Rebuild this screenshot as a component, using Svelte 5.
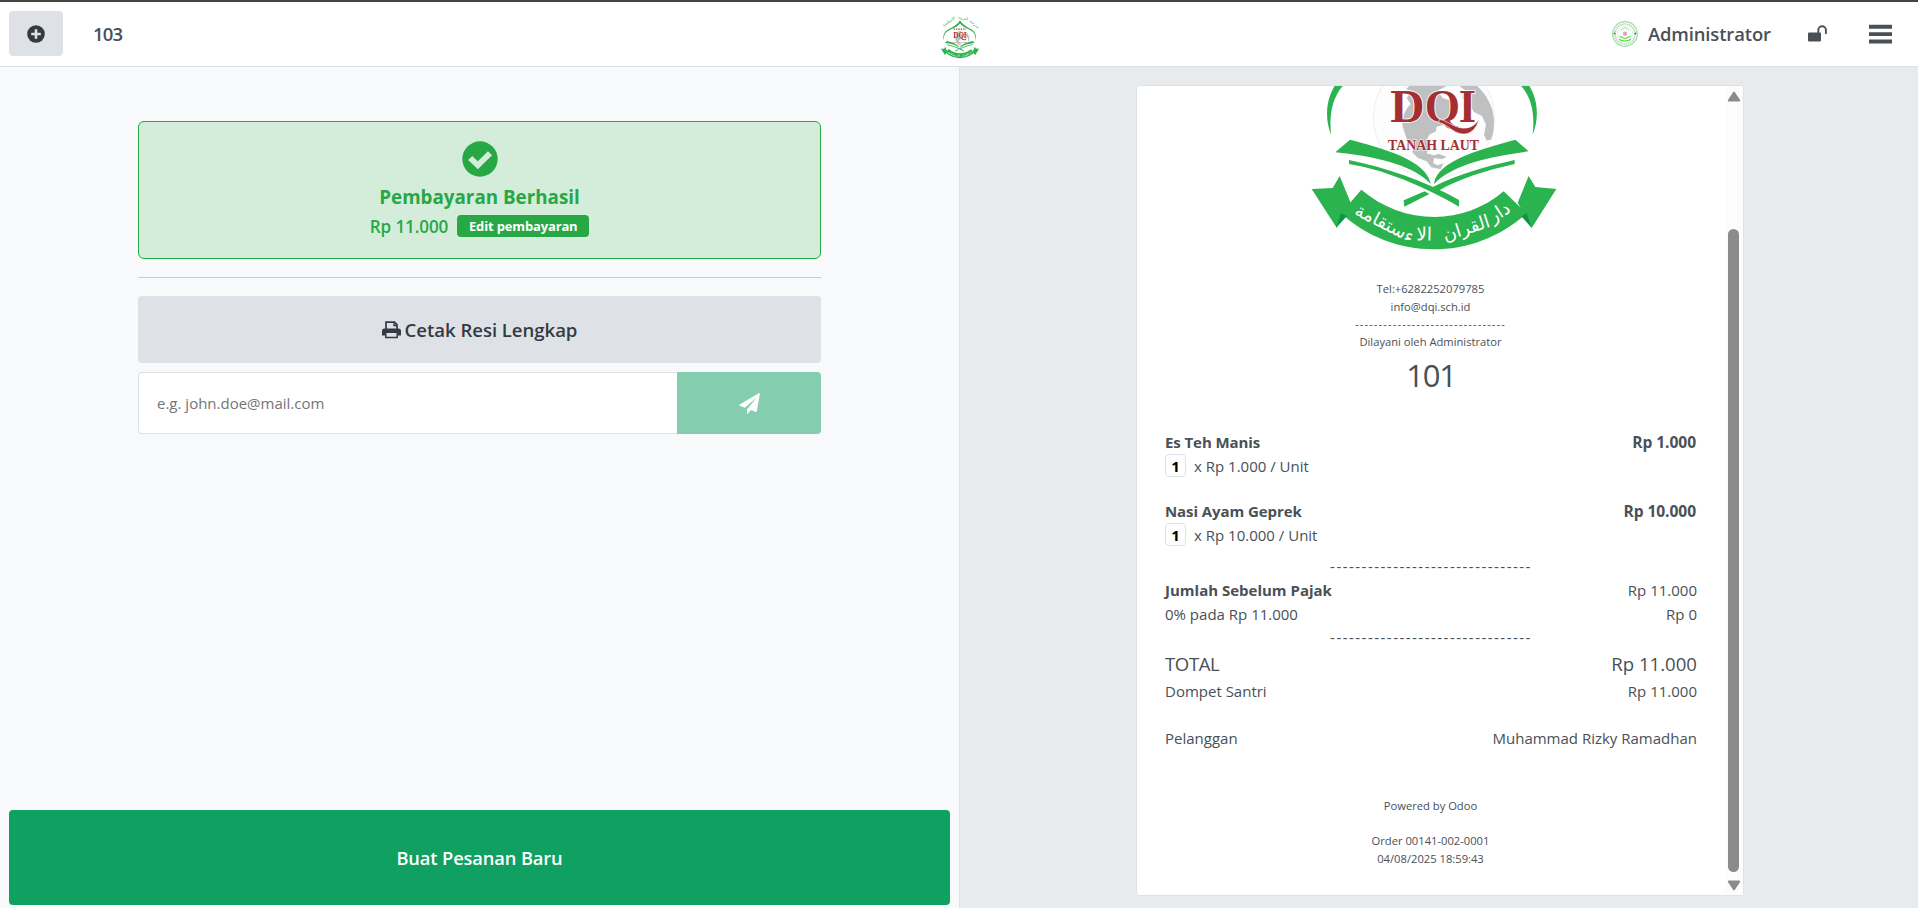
<script>
  const lines = [
    { name: 'Es Teh Manis', total: 'Rp 1.000', qty: '1', unit: 'x Rp 1.000 / Unit' },
    { name: 'Nasi Ayam Geprek', total: 'Rp 10.000', qty: '1', unit: 'x Rp 10.000 / Unit' }
  ];
  const rule = '-'.repeat(32);
</script>

{#snippet emblem()}
  <circle cx="432" cy="125" r="182" fill="#fdfdfd" stroke="#e6e6e6" stroke-width="2" />
  <g fill="#bfc0c2">
    <path d="M338 152 C334 128 345 100 362 84 L350 66 L366 44 L348 40 C366 20 392 8 420 0 L452 6 L470 30 L442 44 L458 66 L486 74 L494 96 L478 122 L480 142 L462 146 L440 152 L438 166 L418 176 L410 192 L420 212 L410 232 L430 238 L446 234 L470 242 L456 250 L432 246 L430 262 L444 268 L460 262 L452 280 L424 274 L410 256 L384 246 L366 228 L372 216 L352 194 Z" />
    <path d="M492 -10 C546 6 588 46 606 98 C616 134 612 168 604 190 L590 194 L582 176 L588 146 L576 120 L552 108 L538 84 L516 66 L528 44 L508 30 L532 26 Z" />
  </g>
  <g class="dqi">
    <text x="301" y="138" textLength="103" lengthAdjust="spacingAndGlyphs">D</text>
    <text x="404" y="138" textLength="106" lengthAdjust="spacingAndGlyphs">Q</text>
    <text x="506" y="138" textLength="52" lengthAdjust="spacingAndGlyphs">I</text>
  </g>
  <path d="M448 130 C470 132 486 152 516 156 C540 158 556 148 567 128 C560 160 540 176 516 174 C486 170 474 144 446 140 Z" fill="#a52e31" stroke="#fff" stroke-width="2" />
  <text class="city" x="294" y="222" textLength="273" lengthAdjust="spacingAndGlyphs">TANAH LAUT</text>
  <g fill="#2bb34f">
    <path d="M123 176 C104 128 106 66 142 18 C200 -60 350 -70 432 -210 C514 -70 664 -60 710 18 C746 66 748 128 728 176 C734 120 728 70 694 30 C640 -40 500 -60 432 -150 C364 -60 220 -40 158 30 C124 70 118 120 123 176 Z" />
    <path d="M180 191 C272 216 410 250 422 324 C366 262 240 240 136 229 Z" />
    <path d="M676 191 C590 216 440 250 432 324 C490 262 614 240 716 226 Z" />
    <path d="M177 252 C290 276 400 312 507 372 L507 392 C400 330 280 280 177 264 Z" />
    <path d="M674 252 C590 270 500 296 427 334 L445 344 C510 308 590 282 674 264 Z" />
    <path d="M341 373 L404 346 L418 354 L343 392 Z" />
    <path d="M65 339 L128 336 L149 300 L182 380 L162 416 L140 455 Z" />
    <path d="M799 339 L736 333 L716 300 L683 380 L704 416 L725 456 Z" />
    <path d="M214 341 C340 448 520 450 641 346 L710 412 C550 556 310 556 153 412 Z" />
  </g>
  <path d="M153 412 L170 421 L138 456 Z M710 412 L694 421 L725 456 Z" fill="#0b9347" />
  <g class="script" direction="rtl">
    <text transform="translate(637 424) rotate(-33)">دار</text>
    <text transform="translate(534 474) rotate(-18)">القران</text>
    <text transform="translate(402 493) rotate(1)">الا</text>
    <text transform="translate(276 458) rotate(27)">ءستقامة</text>
  </g>
{/snippet}

<div class="page">
  <header>
    <div class="nav-left">
      <button class="add" aria-label="+">
        <svg width="18" height="18" viewBox="0 0 18 18"><circle cx="9" cy="9" r="8.8" fill="#343a43" /><path d="M9 4.2v9.6M4.2 9h9.6" stroke="#dee2e6" stroke-width="2.6" /></svg>
      </button>
      <span class="order">103</span>
    </div>
    <svg class="brand" width="40" height="46" viewBox="47 -350 770 885">
      {@render emblem()}
      <g class="motto" direction="rtl">
        <text transform="translate(695 -120) rotate(40)">مدرسة</text>
        <text transform="translate(490 -225) rotate(12)">التربية</text>
        <text transform="translate(230 -165) rotate(-34)">الاسلامية</text>
      </g>
      <path d="M310 -40H550" stroke="#a52e31" stroke-width="22" stroke-dasharray="24 22" />
    </svg>
    <div class="nav-right">
      <svg class="avatar" width="26" height="26" viewBox="0 0 26 26">
        <circle cx="13" cy="13" r="12.3" fill="#fff" stroke="#8fe58f" stroke-width="1.2" />
        <circle cx="13" cy="13" r="10" fill="none" stroke="#bcc3c8" stroke-width="1.6" stroke-dasharray="1.4 .8" />
        <circle cx="13" cy="13" r="7.7" fill="#fbfffb" stroke="#c9efc9" stroke-width=".7" />
        <path d="M9 10C9 8 12 8 13 6.500C14 8 17 8 17 10" fill="none" stroke="#9be69b" />
        <circle cx="13" cy="12.700" r="2.2" fill="#e0a3c4" />
        <path d="M7.500 14.500L13 17L18.500 14.500V16L13 18L7.500 16ZM7 17.500Q13 21.500 19 17.500V19Q13 22 7 19Z" fill="#54dd3c" />
        <path d="M1.800 12.500h1.600M22.600 12.500h1.600" stroke="#44504c" stroke-width="1.400" />
      </svg>
      <span class="user">Administrator</span>
      <svg class="lock" width="19" height="17" viewBox="0 0 19 17"><rect y="7.400" width="13" height="9" rx="1" fill="#495057" /><path d="M10.300 8V5A3.800 3.800 0 0 1 17.900 5V8.300" fill="none" stroke="#495057" stroke-width="1.900" stroke-linecap="round" /></svg>
      <svg class="menu" width="23" height="20" viewBox="0 0 23 20"><path d="M0 .8h23v3.900H0zM0 8.200h23v3.900H0zM0 15.600h23v3.900H0z" fill="#495057" /></svg>
    </div>
  </header>

  <main>
    <section class="left">
      <div class="actions">
        <div class="success">
          <svg width="36" height="36" viewBox="0 0 36 36"><circle cx="18" cy="18" r="17.700" fill="#28a745" /><path d="M8.200 17L15.800 24.300L28 12.200" fill="none" stroke="#d4edda" stroke-width="5.800" stroke-linejoin="miter" /></svg>
          <div class="headline">Pembayaran Berhasil</div>
          <div class="paid"><span class="amount">Rp 11.000</span><span class="edit"><span>Edit pembayaran</span></span></div>
        </div>
        <hr />
        <button class="print">
          <svg width="19" height="18" viewBox="0 0 19 18"><path d="M4 8V1.200H12.500L15 3.700V8" fill="none" stroke="#343a43" stroke-width="1.700" /><path d="M12 1V4.500H15" fill="none" stroke="#343a43" stroke-width="1.400" /><path d="M2.500 7.500H16.500Q19 7.500 19 10V14.500H16V12H3V14.500H0V10Q0 7.500 2.500 7.500Z" fill="#343a43" /><path d="M3.800 11.500V16.600H15.200V11.500" fill="none" stroke="#343a43" stroke-width="1.500" /></svg>
          <span>Cetak Resi Lengkap</span>
        </button>
        <div class="mail">
          <input placeholder="e.g. john.doe@mail.com" />
          <button class="send" aria-label="Kirim">
            <svg width="21" height="21" viewBox="0 0 21 21"><path d="M20.500 .2Q21 .6 20.800 1.200L17.800 18.500Q17.600 19.200 16.800 19L11.800 17L9 20.500Q8.600 21 8 20.700V16.500L17.600 4.600L5.900 14.700L.7 12.700Q-.1 12.200 .7 11.600L19.700 .2Q20.100 0 20.500 .2Z" fill="#fff" /></svg>
          </button>
        </div>
      </div>
      <button class="new">Buat Pesanan Baru</button>
    </section>

    <section class="right">
      <div class="receipt">
        <div class="paper">
          <svg class="logo" width="290" height="180" viewBox="0 30 870 540">{@render emblem()}</svg>
          <div class="heading">
            <div class="small">Tel:+6282252079785</div>
            <div class="small">info@dqi.sch.id</div>
            <div class="small dash">{rule}</div>
            <div class="small">Dilayani oleh Administrator</div>
          </div>
          <div class="tracking">101</div>
          {#each lines as l}
            <div class="item">
              <div class="row bold"><span>{l.name}</span><span class="price">{l.total}</span></div>
              <div class="row unit"><span class="qty">{l.qty}</span><span>{l.unit}</span></div>
            </div>
          {/each}
          <div class="rule one">{rule}</div>
          <div class="row"><b>Jumlah Sebelum Pajak</b><span>Rp 11.000</span></div>
          <div class="row"><span>0% pada Rp 11.000</span><span>Rp 0</span></div>
          <div class="rule">{rule}</div>
          <div class="row total"><span class="label">TOTAL</span><span>Rp 11.000</span></div>
          <div class="row"><span>Dompet Santri</span><span>Rp 11.000</span></div>
          <div class="row customer"><span>Pelanggan</span><span>Muhammad Rizky Ramadhan</span></div>
          <div class="small powered">Powered by Odoo</div>
          <div class="small ref">Order 00141-002-0001</div>
          <div class="small">04/08/2025 18:59:43</div>
        </div>
        <div class="scroll">
          <svg width="14" height="11" viewBox="0 0 14 11"><path d="M7 1.500L12.300 9.500H1.700Z" fill="#8b8b8b" stroke="#8b8b8b" stroke-width="1.800" stroke-linejoin="round" /></svg>
          <div class="thumb"></div>
          <svg width="14" height="11" viewBox="0 0 14 11"><path d="M7 9.500L12.300 1.500H1.700Z" fill="#8b8b8b" stroke="#8b8b8b" stroke-width="1.800" stroke-linejoin="round" /></svg>
        </div>
      </div>
    </section>
  </main>
</div>

<style>
  :global(body) { margin: 0; }
  * { box-sizing: border-box; }
  .page { width: 1918px; height: 908px; display: flex; flex-direction: column; border-top: 2px solid #444; font: 15px "Open Sans", "Noto Sans", sans-serif; color: #495057; overflow: hidden; }
  svg { display: block; flex: none; }
  button { font: inherit; border: 0; padding: 0; display: flex; align-items: center; justify-content: center; }
  header { height: 65px; flex: none; display: grid; grid-template-columns: 1fr 40px 1fr; align-items: center; background: #fff; border-bottom: 1px solid #dee2e6; padding: 0 0 1px 9px; }
  .nav-left { display: flex; align-items: center; padding-right: 7px; }
  .add { width: 54px; height: 45px; border-radius: 4px; background: #dee2e6; }
  .order { margin-left: 30px; font-size: 18.500px; font-weight: 600; letter-spacing: -.8px; }
  .brand { margin-top: 4px; margin-left: -4px; }
  .nav-right { display: flex; align-items: center; justify-content: flex-end; padding-right: 26px; }
  .user { margin-left: 10px; width: 123px; white-space: nowrap; font-size: 18.400px; font-weight: 600; letter-spacing: -.12px; }
  .lock { margin-left: 37px; }
  .menu { margin-left: 42px; }

  main { flex: 1; display: flex; min-height: 0; }
  .left { width: 960px; background: #f8f9fb; border-right: 1px solid #dee2e6; display: flex; flex-direction: column; justify-content: space-between; padding: 54px 9px 3px; }
  .actions { width: 683px; margin-left: 129px; }
  .success { height: 138px; border: 1px solid #28a745; border-radius: 6px; background: #d4edda; color: #28a745; display: flex; flex-direction: column; align-items: center; padding-top: 19px; }
  .headline { font-size: 18.800px; font-weight: 700; line-height: 30px; margin-top: 5px; }
  .paid { display: flex; align-items: center; height: 24px; margin-top: 2px; }
  .amount { font-size: 17.100px; font-weight: 600; letter-spacing: -.12px; }
  .edit { margin-left: 9px; width: 132px; height: 22px; display: flex; align-items: center; justify-content: center; border-radius: 4px; background: #28a745; color: #fff; font-size: 13px; font-weight: 700; letter-spacing: -.15px; white-space: nowrap; }
  hr { border: 0; height: 1px; background: #c8cbcf; margin: 18px 0; }
  .print { width: 100%; height: 67px; border-radius: 4px; background: #dee2e6; color: #343a43; font-size: 18.600px; font-weight: 600; letter-spacing: -.05px; gap: 4px; }
  .mail { display: flex; height: 62px; margin-top: 9px; }
  input { width: 539px; border: 1px solid #dee2e6; border-right: 0; border-radius: 4px 0 0 4px; background: #fff; padding: 0 0 0 18px; font: inherit; outline: 0; }
  input::placeholder { color: #757575; }
  .send { flex: 1; background: #84cdae; border-radius: 0 4px 4px 0; }
  .new { width: 941px; height: 95px; border-radius: 4px; background: #10a062; color: #fff; font-size: 18.300px; font-weight: 600; letter-spacing: -.12px; }

  .right { flex: 1; background: #e7ebee; padding: 18px 0 0 176px; }
  .receipt { width: 608px; height: 811px; border: 1px solid #dee2e6; border-radius: 3px; background: #fff; display: flex; overflow: hidden; }
  .paper { flex: 1; padding: 0 28px 0 28px; }
  .logo { margin-left: 125px; }
  .small { height: 18px; line-height: 18px; font-size: 11.200px; text-align: center; white-space: nowrap; margin-right: 1px; }
  .heading { height: 72px; margin-top: 14px; display: grid; grid-template-rows: 18px 17px 18px 18px; }
  .dash { letter-spacing: 1.120px; }
  .tracking { height: 42px; line-height: 42px; margin: 2px 0 34px; font-size: 31px; letter-spacing: -1.300px; text-align: center; }
  .item { height: 48px; margin-bottom: 21px; }
  .item + .rule { margin-top: -13px; }
  .row { height: 24px; line-height: 24px; display: flex; justify-content: space-between; white-space: nowrap; }
  .bold { font-weight: 700; padding: 0 1px 0 0; letter-spacing: -.08px; }
  .price { font-size: 15.600px; }
  .unit { justify-content: flex-start; }
  .qty { width: 21px; height: 23px; line-height: 22px; border: 1px solid #dee2e6; border-radius: 4px; color: #000; font-weight: 700; text-align: center; margin-right: 8px; }
  .rule { height: 22px; line-height: 22px; text-align: center; letter-spacing: 1.480px; }
  .one { margin-bottom: 1px; }
  .total { height: 30px; line-height: 30px; font-size: 18.600px; margin-top: 1px; }
  .label { letter-spacing: -.4px; }
  .customer { margin-top: 23px; }
  .powered { margin-top: 47px; }
  .ref { margin-top: 17px; }
  .scroll { width: 18px; background: #fcfcfc; display: flex; flex-direction: column; align-items: center; padding: 5px 1px 4px 0; }
  .thumb { width: 11px; height: 643px; border-radius: 6px; background: #8b8b8b; margin: auto 0 8px; }

  .dqi text { font: 700 139px "Liberation Serif", serif; fill: #a52e31; stroke: #fff; stroke-width: 5px; paint-order: stroke; }
  .city { font: 700 45px "Liberation Serif", serif; fill: #a52e31; stroke: #fff; stroke-width: 3px; paint-order: stroke; }
  .script text { font: 55px "DejaVu Sans", sans-serif; fill: #fff; text-anchor: middle; }
  .motto text { font: 76px "DejaVu Sans", sans-serif; fill: #2bb34f; text-anchor: middle; }
</style>
